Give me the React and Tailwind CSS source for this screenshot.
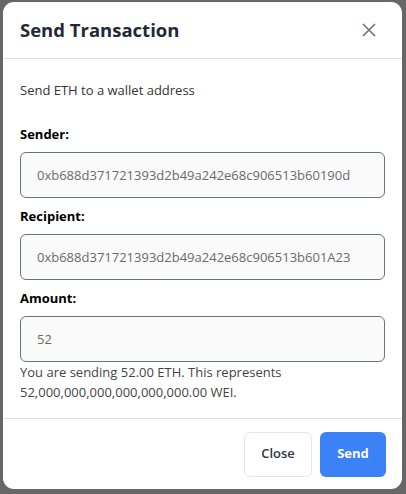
import React from "react";

const font = { fontFamily: '"Open Sans", "Noto Sans", sans-serif' };

const Field = ({ label, value }) => (
  <div>
    <label className="block text-[13px] font-bold text-black leading-[20px] mb-[8px]">{label}</label>
    <input
      type="text"
      readOnly
      value={value}
      className="w-full h-[46px] px-[16px] border border-[#6b7280] rounded-[6px] bg-[#fafafa] text-[13px] text-[#6b6b6b] outline-none"
    />
  </div>
);

const App = () => {
  return (
    <div className="w-[406px] h-[494px] bg-[#676767] pt-[2px] pl-[3px]" style={font}>
      <div className="w-[399px] h-[487px] bg-white rounded-[11px] flex flex-col">
        {/* header */}
        <div className="h-[57px] flex items-center justify-between pl-[17px] pr-[26px] border-b border-[#e2e2e2]">
          <h2 className="text-[18.5px] font-bold text-[#1f2937]">Send Transaction</h2>
          <button className="text-[#6b7280]">
            <svg width="14" height="14" viewBox="0 0 14 14" fill="none" stroke="currentColor" strokeWidth="1.6">
              <path d="M1 1L13 13M13 1L1 13" />
            </svg>
          </button>
        </div>

        {/* body */}
        <div className="flex-1 px-[17px] pt-[21px]">
          <p className="text-[13px] text-[#333] leading-[20px] mb-[24px]">Send ETH to a wallet address</p>
          <div className="flex flex-col gap-[8px]">
            <Field label="Sender:" value="0xb688d371721393d2b49a242e68c906513b60190d" />
            <Field label="Recipient:" value="0xb688d371721393d2b49a242e68c906513b601A23" />
            <Field label="Amount:" value="52" />
          </div>
          <p className="text-[13px] text-[#444] leading-[20px]">
            You are sending 52.00 ETH. This represents 52,000,000,000,000,000,000.00 WEI.
          </p>
        </div>

        {/* footer */}
        <div className="h-[71px] border-t border-[#e2e2e2] flex items-center justify-end gap-[8px] pr-[16px]">
          <button className="w-[68px] h-[45px] rounded-[6px] border border-[#e5e7eb] bg-white text-[13px] font-semibold text-[#2d3748]">
            Close
          </button>
          <button className="w-[66px] h-[45px] rounded-[6px] bg-[#3b82f6] text-[13px] font-bold text-white">
            Send
          </button>
        </div>
      </div>
    </div>
  );
};

export default App;
